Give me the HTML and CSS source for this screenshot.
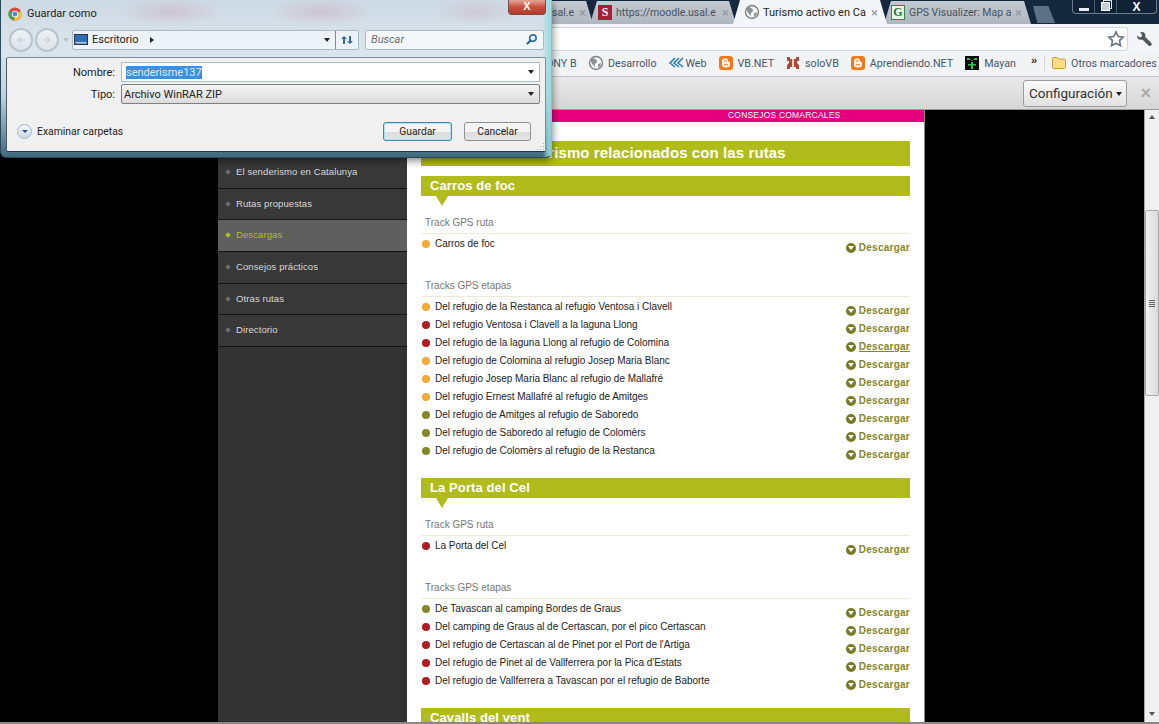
FILE: index.html
```html
<!DOCTYPE html>
<html lang="es">
<head>
  <meta charset="UTF-8">
  <title>Turismo activo en Catalunya</title>
  <link rel="stylesheet" href="styles.css">
</head>
<body>
<div class="browser">

  <!-- Tab strip -->
  <div class="tabstrip">
    <div class="tab tab-first"><span class="tab-title">sal.e</span><span class="tab-x">×</span></div>
    <div class="tab tab-moodle"><span class="fav fav-s">S</span><span class="tab-title">https://moodle.usal.e</span><span class="tab-x">×</span></div>
    <div class="tab tab-active">
      <svg class="fav-svg" viewBox="0 0 16 16"><circle cx="8" cy="8" r="6.5" fill="#fff" stroke="#7b8288" stroke-width="1.4"/><path d="M5 3c2 1 3 1 4 3S6 8 7 11s-3-2-4-4 0-3 2-4zM10 9l3-1c0 2-1 4-3 5z" fill="#8b9298"/></svg>
      <span class="tab-title">Turismo activo en Ca</span><span class="tab-x">×</span>
    </div>
    <div class="tab tab-gps">
      <span class="fav fav-g">G</span>
      <span class="tab-title">GPS Visualizer: Map a</span><span class="tab-x">×</span>
    </div>
    <div class="tab-new"></div>
    <div class="win-buttons">
      <span class="win-btn"><i class="win-min"></i></span>
      <span class="win-btn"><i class="win-max"></i></span>
      <span class="win-btn win-close">X</span>
    </div>
  </div>

  <!-- Address bar -->
  <div class="toolbar">
    <div class="omnibox">
      <svg class="star" viewBox="0 0 18 18"><path d="M9 1.800l2.200 4.700 5 .6-3.700 3.500 1 5.100L9 13.200l-4.500 2.500 1-5.100L1.800 7.100l5-.6z" fill="#fff" stroke="#66757f" stroke-width="1.600"/></svg>
    </div>
    <svg class="wrench" viewBox="0 0 18 18"><path d="M2 5.500l2.700 2 2-.7.300-2.300L5 2.500c2.300-1.200 5-.3 5.300 2.500 0 .7 0 1.200-.2 1.700l6 6.100c.9 1 .9 2-.1 2.800-.8.700-1.800.7-2.600-.2l-5.900-6c-2.700 1-5.800-.5-5.500-3.900z" fill="#50555b"/></svg>
  </div>

  <!-- Bookmarks -->
  <div class="bookmarks">
    <span class="bm bm-cut">ONY B</span>
    <span class="bm">
      <svg class="bm-icon" viewBox="0 0 16 16"><circle cx="8" cy="8" r="6.500" fill="#fff" stroke="#7b8288" stroke-width="1.400"/><path d="M5 3c2 1 3 1 4 3S6 8 7 11s-3-2-4-4 0-3 2-4zM10 9l3-1c0 2-1 4-3 5z" fill="#8b9298"/></svg>
      Desarrollo
    </span>
    <span class="bm">
      <svg class="bm-icon bm-web" viewBox="0 0 16 16"><path d="M7 3L2 8l5 4M11 3L6 8l5 4M15 3l-5 5 5 4" fill="none" stroke="#2f7fc0" stroke-width="1.600"/></svg>
      Web
    </span>
    <span class="bm">
      <svg class="bm-icon" viewBox="0 0 16 16"><rect x="1" y="1" width="14" height="14" rx="3" fill="#ef7a1c"/><path d="M4 6c0-1.700 1-2.500 2.500-2.500h1.500C9.500 3.500 10 4.500 10 6.500c1.300 0 2 .5 2 1.500v2c0 1.500-1 2.500-2.500 2.500h-3C5 12.500 4 11.500 4 10z" fill="#fdf3e8"/><path d="M6 6h2.500M6 9.800h4" stroke="#ef7a1c" stroke-width="1.100"/></svg>
      VB.NET
    </span>
    <span class="bm">
      <svg class="bm-icon" viewBox="0 0 16 16"><path d="M2 2h3v2h6V2h3v4h-2v2l2 2v4h-3v-2H5v2H2v-4l2-2V6H2z" fill="#a84a3c"/><path d="M7 4h2v9H7z" fill="#e8d8b0"/></svg>
      soloVB
    </span>
    <span class="bm">
      <svg class="bm-icon" viewBox="0 0 16 16"><rect x="1" y="1" width="14" height="14" rx="3" fill="#ef7a1c"/><path d="M4 6c0-1.700 1-2.500 2.500-2.500h1.500C9.500 3.500 10 4.500 10 6.500c1.300 0 2 .5 2 1.500v2c0 1.500-1 2.500-2.500 2.500h-3C5 12.500 4 11.500 4 10z" fill="#fdf3e8"/><path d="M6 6h2.500M6 9.800h4" stroke="#ef7a1c" stroke-width="1.100"/></svg>
      Aprendiendo.NET
    </span>
    <span class="bm">
      <svg class="bm-icon" viewBox="0 0 16 16"><rect x="1" y="1" width="14" height="14" fill="#0a0a0a"/><path d="M3 3h2l3 3 3-3h2v2H3zM7 7h2v2h3v1.500H9V14H7v-3.500H4V9h3z" fill="#3ac24a"/></svg>
      Mayan
    </span>
    <span class="bm-more">»</span>
    <span class="bm-sep"></span>
    <span class="bm bm-last">
      <svg class="bm-icon" viewBox="0 0 16 16"><path d="M1.500 4c0-1 .5-1.500 1.500-1.500h3L7.500 4H13c1 0 1.500.5 1.500 1.500V12c0 1-.5 1.500-1.500 1.500H3c-1 0-1.500-.5-1.500-1.500z" fill="#f6dc8c" stroke="#c89a3c"/></svg>
      Otros marcadores
    </span>
  </div>

  <!-- Translate bar -->
  <div class="infobar">
    <button class="config-btn">Configuración <i class="caret"></i></button>
    <span class="infobar-x">×</span>
  </div>

  <!-- Page -->
  <div class="viewport">
    <div class="page">
      <div class="site">
        <nav class="sidebar">
          <div class="nav-top"></div>
          <a class="nav-item">El senderismo en Catalunya</a>
          <a class="nav-item">Rutas propuestas</a>
          <a class="nav-item nav-active">Descargas</a>
          <a class="nav-item">Consejos prácticos</a>
          <a class="nav-item">Otras rutas</a>
          <a class="nav-item">Directorio</a>
        </nav>
        <main class="content">
          <div class="pink-bar">CONSEJOS COMARCALES</div>
          <div class="content-body">
            <h1 class="main-title">Tracks de senderismo relacionados con las rutas</h1>

            <section class="route">
              <h2 class="route-title">Carros de foc</h2>
              <h3 class="group-title">Track GPS ruta</h3>
              <ul class="tracks">
                <li><span class="dot dot-orange"></span><span class="name">Carros de foc</span><a class="dl"><i class="dl-icon"></i>Descargar</a></li>
              </ul>
              <h3 class="group-title group-second">Tracks GPS etapas</h3>
              <ul class="tracks">
                <li><span class="dot dot-orange"></span><span class="name">Del refugio de la Restanca al refugio Ventosa i Clavell</span><a class="dl"><i class="dl-icon"></i>Descargar</a></li>
                <li><span class="dot dot-red"></span><span class="name">Del refugio Ventosa i Clavell a la laguna Llong</span><a class="dl"><i class="dl-icon"></i>Descargar</a></li>
                <li><span class="dot dot-red"></span><span class="name">Del refugio de la laguna Llong al refugio de Colomina</span><a class="dl dl-hover"><i class="dl-icon"></i><u>Descargar</u></a></li>
                <li><span class="dot dot-orange"></span><span class="name">Del refugio de Colomina al refugio Josep Maria Blanc</span><a class="dl"><i class="dl-icon"></i>Descargar</a></li>
                <li><span class="dot dot-orange"></span><span class="name">Del refugio Josep Maria Blanc al refugio de Mallafré</span><a class="dl"><i class="dl-icon"></i>Descargar</a></li>
                <li><span class="dot dot-orange"></span><span class="name">Del refugio Ernest Mallafré al refugio de Amitges</span><a class="dl"><i class="dl-icon"></i>Descargar</a></li>
                <li><span class="dot dot-olive"></span><span class="name">Del refugio de Amitges al refugio de Saboredo</span><a class="dl"><i class="dl-icon"></i>Descargar</a></li>
                <li><span class="dot dot-olive"></span><span class="name">Del refugio de Saboredo al refugio de Colomèrs</span><a class="dl"><i class="dl-icon"></i>Descargar</a></li>
                <li><span class="dot dot-olive"></span><span class="name">Del refugio de Colomèrs al refugio de la Restanca</span><a class="dl"><i class="dl-icon"></i>Descargar</a></li>
              </ul>
            </section>

            <section class="route">
              <h2 class="route-title">La Porta del Cel</h2>
              <h3 class="group-title">Track GPS ruta</h3>
              <ul class="tracks">
                <li><span class="dot dot-red"></span><span class="name">La Porta del Cel</span><a class="dl"><i class="dl-icon"></i>Descargar</a></li>
              </ul>
              <h3 class="group-title group-second">Tracks GPS etapas</h3>
              <ul class="tracks">
                <li><span class="dot dot-olive"></span><span class="name">De Tavascan al camping Bordes de Graus</span><a class="dl"><i class="dl-icon"></i>Descargar</a></li>
                <li><span class="dot dot-red"></span><span class="name">Del camping de Graus al de Certascan, por el pico Certascan</span><a class="dl"><i class="dl-icon"></i>Descargar</a></li>
                <li><span class="dot dot-red"></span><span class="name">Del refugio de Certascan al de Pinet por el Port de l'Artiga</span><a class="dl"><i class="dl-icon"></i>Descargar</a></li>
                <li><span class="dot dot-red"></span><span class="name">Del refugio de Pinet al de Vallferrera por la Pica d'Estats</span><a class="dl"><i class="dl-icon"></i>Descargar</a></li>
                <li><span class="dot dot-red"></span><span class="name">Del refugio de Vallferrera a Tavascan por el refugio de Baborte</span><a class="dl"><i class="dl-icon"></i>Descargar</a></li>
              </ul>
            </section>

            <section class="route">
              <h2 class="route-title">Cavalls del vent</h2>
            </section>
          </div>
        </main>
      </div>
      <div class="scrollbar">
        <span class="sb-arrow sb-up"></span>
        <div class="sb-thumb"><span class="sb-grip"></span></div>
        <span class="sb-arrow sb-down"></span>
      </div>
    </div>
  </div>
  <div class="bottom-edge"></div>
</div>

<!-- Save dialog -->
<div class="dialog">
  <div class="dlg-title">
    <svg class="chrome-logo" viewBox="0 0 16 16">
      <circle cx="8" cy="8" r="7.500" fill="#e0483a"/>
      <path d="M8 8L1.500 4.200A7.500 7.500 0 0 0 7 15.400z" fill="#3fa64b"/>
      <path d="M8 8l6.800-3.200A7.500 7.500 0 0 1 7 15.400z" fill="#f3c72f"/>
      <circle cx="8" cy="8" r="3.700" fill="#fff"/><circle cx="8" cy="8" r="2.800" fill="#4a8ce0"/>
    </svg>
    <span>Guardar como</span>
    <span class="dlg-close">X</span>
  </div>
  <div class="dlg-nav">
    <div class="nav-round">
      <span class="round-btn"><svg viewBox="0 0 12 12"><path d="M10 6H3M6 3L3 6l3 3" fill="none" stroke="#cfd6dc" stroke-width="1.500"/></svg></span>
      <span class="round-btn"><svg viewBox="0 0 12 12"><path d="M2 6h7M6 3l3 3-3 3" fill="none" stroke="#cfd6dc" stroke-width="1.500"/></svg></span>
      <i class="round-caret"></i>
    </div>
    <div class="path-box">
      <svg class="desk-icon" viewBox="0 0 14 12"><rect x=".5" y=".5" width="13" height="10" fill="#2c6fb8" stroke="#334"/><rect x="1.500" y="8" width="11" height="1.500" fill="#bcd"/></svg>
      <span>Escritorio</span><i class="arrow-right"></i>
      <i class="arrow-down"></i>
      <span class="refresh">
        <svg viewBox="0 0 14 12"><path d="M1 5l3-3 3 3H5v5H3V5zM13 7l-3 3-3-3h2V2h2v5z" fill="#2d6ea8"/></svg>
      </span>
    </div>
    <div class="search-box">
      <span>Buscar</span>
      <svg viewBox="0 0 14 14"><circle cx="8.500" cy="5.500" r="3.500" fill="none" stroke="#2f6fa8" stroke-width="1.800"/><path d="M6 8l-4 4" stroke="#1f5a90" stroke-width="2.200"/></svg>
    </div>
  </div>
  <div class="dlg-body">
    <div class="field">
      <label>Nombre:</label>
      <div class="name-input"><span class="selected">senderisme137</span><i class="arrow-down"></i></div>
    </div>
    <div class="field">
      <label>Tipo:</label>
      <div class="type-select"><span>Archivo WinRAR ZIP</span><i class="arrow-down"></i></div>
    </div>
    <div class="dlg-foot">
      <span class="browse"><span class="browse-icon"><i></i></span>Examinar carpetas</span>
      <button class="btn btn-default">Guardar</button>
      <button class="btn btn-cancel">Cancelar</button>
    </div>
  </div>
</div>
</body>
</html>
```

FILE: styles.css
```css
* {
  box-sizing: border-box;
}

html, body {
  margin: 0;
  height: 100%;
  overflow: hidden;
}

body {
  font-family: Roboto, "Noto Sans", sans-serif;
  background: #000;
}

.browser {
  display: flex;
  flex-direction: column;
  height: 724px;
}

/* tabs */
.tabstrip {
  display: flex;
  align-items: flex-end;
  height: 24px;
  padding-left: 552px;
  background: #14293e;
  flex: none;
}

.tab {
  display: flex;
  align-items: center;
  gap: 4px;
  height: 23px;
  margin-right: -3px;
  font-size: 10.500px;
  color: #46525e;
  background: linear-gradient(#c3cad1, #aeb6bf);
  clip-path: polygon(0 100%, 7px 0, calc(100% - 7px) 0, 100% 100%);
  white-space: nowrap;
  overflow: hidden;
  flex: none;
}

.tab-first {
  width: 41px;
  padding-right: 7px;
  clip-path: polygon(0 0, calc(100% - 7px) 0, 100% 100%, 0 100%);
}

.tab-moodle {
  width: 146px;
  padding: 0 7px 0 8px;
}

.tab-active {
  width: 154px;
  padding: 0 9px 0 11px;
  gap: 3px;
  height: 24px;
  background: #f3f5f8;
  color: #222;
  font-size: 11px;
  z-index: 1;
}

.tab-gps {
  width: 147px;
  padding: 0 9px 0 7px;
}

.tab-title {
  flex: 1;
  overflow: hidden;
}

.tab-x {
  color: #8d959e;
  font-size: 13px;
  line-height: 1;
}

.fav {
  flex: none;
  width: 14px;
  height: 15px;
  font: bold 12px/15px "Liberation Serif", serif;
  text-align: center;
}

.fav-s {
  background: #a32035;
  color: #fff;
}

.fav-g {
  background: #e8f3ea;
  border: 1px solid #2c8a4c;
  color: #1d7a3a;
  line-height: 13px;
}

.fav-svg {
  flex: none;
  width: 16px;
  height: 16px;
}

.tab-new {
  width: 22px;
  height: 17px;
  margin: 0 0 1px 5px;
  background: #5c7183;
  clip-path: polygon(0 0, 70% 0, 100% 100%, 20% 100%);
  flex: none;
}

.win-buttons {
  display: flex;
  align-self: flex-start;
  margin: 0 2px 0 auto;
  height: 14px;
  border: 1px solid #6c7c8c;
  border-top: 0;
  border-radius: 0 0 4px 4px;
  background: #0f2236;
}

.win-btn {
  display: flex;
  align-items: center;
  justify-content: center;
  width: 22px;
  border-right: 1px solid #4a5a6a;
  color: #fff;
  font: bold 12px "Liberation Sans", sans-serif;
}

.win-close {
  width: 39px;
  border-right: 0;
}

.win-min {
  width: 10px;
  height: 3px;
  background: #e8ecef;
  margin-top: 5px;
}

.win-max {
  width: 9px;
  height: 9px;
  border: 1px solid #fff;
  background: #c9d0d6;
  box-shadow: 2px -2px 0 -1px #0f2236, 2px -2px 0 0 #dfe4e8;
}

/* address bar */
.toolbar {
  display: flex;
  align-items: center;
  gap: 7px;
  height: 28px;
  padding: 2px 6px 0 0;
  background: #f3f5f8;
  flex: none;
}

.omnibox {
  display: flex;
  align-items: center;
  justify-content: flex-end;
  flex: 1;
  height: 24px;
  padding-right: 2px;
  background: #fff;
  border: 1px solid #d3d7dc;
  border-left: 0;
  border-radius: 0 3px 3px 0;
}

.star, .wrench {
  width: 18px;
  height: 18px;
}

/* bookmarks */
.bookmarks {
  display: flex;
  align-items: center;
  height: 25px;
  padding: 0 0 2px 546px;
  background: #f1f3f5;
  border-bottom: 1px solid #bfc3c7;
  flex: none;
  white-space: nowrap;
}

.bm {
  display: flex;
  align-items: center;
  gap: 4px;
  margin-right: 11px;
  font-size: 10.700px;
  color: #47566f;
}

.bm-cut {
  width: 42px;
  margin-right: 0;
}

.bm-last {
  margin-right: 0;
}

.bm-icon {
  width: 16px;
  height: 16px;
  flex: none;
}

.bm-web {
  margin-right: -2px;
}

.bm-more {
  margin: -6px 7px 0 4px;
  font: bold 11px "Liberation Sans", sans-serif;
  color: #333;
}

.bm-sep {
  width: 1px;
  height: 16px;
  margin-right: 6px;
  background: #d4d7da;
}

/* translate bar */
.infobar {
  display: flex;
  align-items: center;
  justify-content: flex-end;
  height: 33px;
  padding-right: 8px;
  gap: 13px;
  background: linear-gradient(#e9e9e9, #d6d6d6);
  border-bottom: 1px solid #9a9a9a;
  flex: none;
}

.config-btn {
  height: 27px;
  width: 104px;
  padding: 0;
  font: 13.500px Roboto, sans-serif;
  color: #333;
  background: linear-gradient(#fafafa, #e2e2e2);
  border: 1px solid #9c9c9c;
  border-radius: 3px;
}

.caret {
  display: inline-block;
  border: 3px solid transparent;
  border-top: 4px solid #222;
  border-bottom: 0;
  vertical-align: middle;
}

.infobar-x {
  color: #aaa;
  font: bold 18px "Liberation Sans", sans-serif;
}

/* page */
.viewport {
  flex: 1;
  min-height: 0;
  overflow: hidden;
}

.page {
  display: flex;
  height: 100%;
  background: #000;
}

.site {
  display: flex;
  flex: 1;
  min-width: 0;
  height: 100%;
  padding-left: 218px;
  overflow: hidden;
  font-family: "Liberation Sans", Arial, sans-serif;
}

.sidebar {
  width: 189px;
  flex: none;
  background: #333;
}

.nav-top {
  height: 47px;
  border-bottom: 1px solid #111;
}

.nav-item {
  display: block;
  height: 31.700px;
  padding: 0 0 0 18px;
  line-height: 30px;
  font-size: 9.500px;
  letter-spacing: .1px;
  color: #d8d8d8;
  background: #383838;
  border-bottom: 1px solid #141414;
  position: relative;
}

.nav-item::before {
  content: "";
  position: absolute;
  left: 8px;
  top: 13px;
  width: 4px;
  height: 4px;
  background: #6d6d6d;
  transform: rotate(45deg);
}

.nav-active {
  background: #5f5f5f;
  color: #b1bc1c;
}

.nav-active::before {
  background: #b1bc1c;
}

.content {
  width: 518px;
  flex: none;
  background: #fff;
  border-right: 1px solid #888;
  overflow: hidden;
}

.pink-bar {
  height: 12px;
  padding-left: 321px;
  background: #e6007e;
  color: #fff;
  font-size: 8.500px;
  line-height: 10px;
  letter-spacing: .2px;
}

.content-body {
  padding: 19px 14px 0;
}

.main-title {
  margin: 0 0 10px;
  height: 25px;
  padding-left: 9px;
  background: #b1bc1c;
  color: #fff;
  font-size: 15px;
  line-height: 23px;
  letter-spacing: .1px;
}

.route {
  margin-bottom: 19px;
}

.route-title {
  position: relative;
  margin: 0 0 18px;
  height: 20px;
  padding-left: 9px;
  background: #b1bc1c;
  color: #fff;
  font-size: 13px;
  line-height: 20px;
  letter-spacing: .1px;
}

.route-title::after {
  content: "";
  position: absolute;
  left: 15px;
  top: 20px;
  border: 6px solid transparent;
  border-top: 10px solid #b1bc1c;
  border-bottom: 0;
}

.group-title {
  margin: 0;
  height: 20px;
  padding-left: 4px;
  border-bottom: 1px solid #ecebd8;
  color: #777;
  font-size: 10px;
  font-weight: normal;
  line-height: 18px;
}

.group-second {
  margin-top: 25px;
}

.tracks {
  list-style: none;
  margin: 0;
  padding: 0;
}

.tracks li {
  display: flex;
  height: 18px;
  align-items: flex-start;
  padding-top: 4px;
  font-size: 10px;
  line-height: 12px;
  letter-spacing: -.03px;
  color: #222;
}

.dot {
  width: 8px;
  height: 8px;
  margin: 2px 5px 0 1px;
  border-radius: 50%;
  flex: none;
}

.dot-orange {
  background: #f4a933;
}

.dot-red {
  background: #b01c22;
}

.dot-olive {
  background: #84862a;
}

.name {
  flex: 1;
}

.dl {
  display: flex;
  align-items: center;
  gap: 3px;
  margin-top: 4px;
  font-weight: bold;
  color: #84862a;
  letter-spacing: .25px;
}

.dl-icon {
  position: relative;
  width: 10px;
  height: 10px;
  background: #777a22;
  border-radius: 50%;
}

.dl-icon::after {
  content: "";
  position: absolute;
  left: 2px;
  top: 3px;
  border: 3px solid transparent;
  border-top: 4px solid #fff;
  border-bottom: 0;
}

/* scrollbar */
.scrollbar {
  display: flex;
  flex-direction: column;
  width: 15px;
  flex: none;
  background: #f0f0f0;
  border-left: 1px solid #aaa;
}

.sb-arrow {
  height: 15px;
  flex: none;
}

.sb-up::after, .sb-down::after {
  content: "";
  display: block;
  margin: 5px auto;
  width: 0;
  border: 3px solid transparent;
}

.sb-up::after {
  border-bottom: 4px solid #555;
  border-top: 0;
}

.sb-down::after {
  border-top: 4px solid #555;
  border-bottom: 0;
}

.sb-thumb {
  display: flex;
  align-items: center;
  justify-content: center;
  height: 186px;
  margin-top: 85px;
  margin-bottom: auto;
  background: linear-gradient(to right, #f2f2f2, #d9d9d9);
  border: 1px solid #a8a8a8;
  border-radius: 2px;
}

.sb-grip {
  width: 6px;
  height: 7px;
  background: repeating-linear-gradient(#666 0 1px, transparent 1px 2px);
}

.bottom-edge {
  height: 2px;
  background: #888;
  flex: none;
}

/* save as dialog */
.dialog {
  position: absolute;
  left: 0;
  top: 0;
  width: 552px;
  height: 158px;
  padding: 0 5px 5px;
  border: 1px solid #2a4a5c;
  border-top: 0;
  border-right-color: #7fc4cc;
  border-radius: 0 0 6px 6px;
  background:
    radial-gradient(ellipse 50px 14px at 170px 12px, rgba(190, 90, 110, .18), transparent),
    radial-gradient(ellipse 50px 14px at 320px 12px, rgba(190, 90, 110, .18), transparent),
    radial-gradient(ellipse 40px 14px at 475px 12px, rgba(190, 90, 110, .14), transparent),
    linear-gradient(to right, transparent 98.500%, rgba(150, 220, 225, .8) 99.500%),
    linear-gradient(#cdd9e3, #dbe5ed 32%, #c3d3de 60%, #6f92a4 85%, #3e6a7c);
  box-shadow: 0 2px 9px rgba(0, 0, 0, .55);
  display: flex;
  flex-direction: column;
  font-size: 11px;
  color: #222;
}

.dlg-title {
  display: flex;
  align-items: center;
  gap: 5px;
  height: 27px;
  padding-left: 2px;
  font-size: 11px;
  color: #222;
}

.chrome-logo {
  width: 14px;
  height: 14px;
}

.dlg-close {
  align-self: flex-start;
  margin-left: auto;
  width: 38px;
  height: 15px;
  background: linear-gradient(#e3a898, #c9503f 50%, #b03a2c);
  border: 1px solid #7a4a4a;
  border-top: 0;
  border-radius: 0 0 4px 4px;
  color: #fff;
  font: bold 11px/13px "Liberation Sans", sans-serif;
  text-align: center;
}

.dlg-nav {
  display: flex;
  align-items: center;
  gap: 6px;
  height: 25px;
  margin-bottom: 5px;
}

.nav-round {
  display: flex;
  align-items: center;
  gap: 2px;
  width: 60px;
  padding-left: 3px;
  flex: none;
}

.round-btn {
  display: flex;
  align-items: center;
  justify-content: center;
  width: 24px;
  height: 24px;
  flex: none;
  border: 2px solid #bac3cb;
  border-radius: 50%;
  background: linear-gradient(#eef2f5, #dde3e8);
}

.round-btn svg {
  width: 12px;
  height: 12px;
}

.round-caret {
  margin-left: 2px;
  border: 3px solid transparent;
  border-top: 4px solid #b6c2cc;
  border-bottom: 0;
}

.path-box {
  display: flex;
  align-items: center;
  gap: 4px;
  width: 287px;
  height: 20px;
  padding-left: 1px;
  background: rgba(238, 244, 249, .9);
  border: 1px solid #a8bac8;
  border-radius: 2px;
  font-size: 11px;
}

.desk-icon {
  width: 14px;
  height: 12px;
}

.arrow-right {
  margin-left: 7px;
  border: 3px solid transparent;
  border-left: 4px solid #222;
  border-right: 0;
}

.arrow-down {
  margin-left: auto;
  border: 3.500px solid transparent;
  border-top: 4px solid #222;
  border-bottom: 0;
}

.refresh {
  display: flex;
  align-items: center;
  justify-content: center;
  width: 23px;
  height: 18px;
  margin-left: 1px;
  border-left: 1px solid #7a8c9a;
}

.refresh svg {
  width: 14px;
  height: 12px;
}

.search-box {
  display: flex;
  align-items: center;
  justify-content: space-between;
  width: 179px;
  height: 20px;
  padding: 0 5px;
  background: rgba(244, 248, 251, .95);
  border: 1px solid #a8bac8;
  border-radius: 2px;
  font-size: 11px;
  font-style: italic;
  color: #6d6d6d;
}

.search-box svg {
  width: 13px;
  height: 13px;
}

.dlg-body {
  position: relative;
  flex: 1;
  padding: 4px 5px 0 0;
  background: #f0f0f0;
  border: 1px solid #7d8d98;
  border-bottom-color: #26343e;
  border-left-color: #4a5a66;
  border-radius: 2px;
  display: flex;
  flex-direction: column;
}

.dlg-body::after {
  content: "";
  position: absolute;
  right: 1px;
  bottom: 1px;
  width: 8px;
  height: 8px;
  background: radial-gradient(circle, #a4acb2 0 1px, transparent 1px) 0 0 / 3px 3px;
  clip-path: polygon(100% 0, 100% 100%, 0 100%);
}

.field {
  display: flex;
  align-items: center;
  height: 20px;
  margin-bottom: 2px;
  font-size: 11px;
}

.field label {
  width: 114px;
  text-align: right;
  padding-right: 6px;
  flex: none;
}

.name-input, .type-select {
  display: flex;
  align-items: center;
  flex: 1;
  height: 20px;
  padding: 0 5px 0 4px;
  border: 1px solid #a6bccc;
}

.name-input {
  background: #fff;
}

.selected {
  background: #3c8fe6;
  color: #d8ebff;
}

.type-select {
  padding-left: 2px;
  background: linear-gradient(#f4f4f4, #dcdcdc);
  border-color: #7f7f7f;
  border-radius: 2px;
}

.dlg-foot {
  display: flex;
  align-items: center;
  margin-top: 16px;
  padding: 0 9px 0 10px;
}

.browse {
  display: flex;
  align-items: center;
  gap: 5px;
  margin-right: auto;
  font-size: 10.400px;
}

.browse-icon {
  display: flex;
  align-items: center;
  justify-content: center;
  width: 15px;
  height: 15px;
  border: 1px solid #aab6c2;
  border-radius: 50%;
  background: linear-gradient(#f4f7fa, #c9d6e2);
}

.browse-icon i {
  border: 3px solid transparent;
  border-top: 3px solid #2a4a9a;
  border-bottom: 0;
}

.btn {
  height: 19px;
  padding: 0;
  font: 10.300px Roboto, sans-serif;
  color: #222;
  background: linear-gradient(#f4f4f4 50%, #dcdcdc 50%, #e6e6e6);
  border: 1px solid #8f8f8f;
  border-radius: 3px;
}

.btn-default {
  width: 69px;
  border-color: #3c89ad;
  box-shadow: inset 0 0 1px 1px #a9e2f4;
}

.btn-cancel {
  width: 67px;
  margin-left: 12px;
}
```
